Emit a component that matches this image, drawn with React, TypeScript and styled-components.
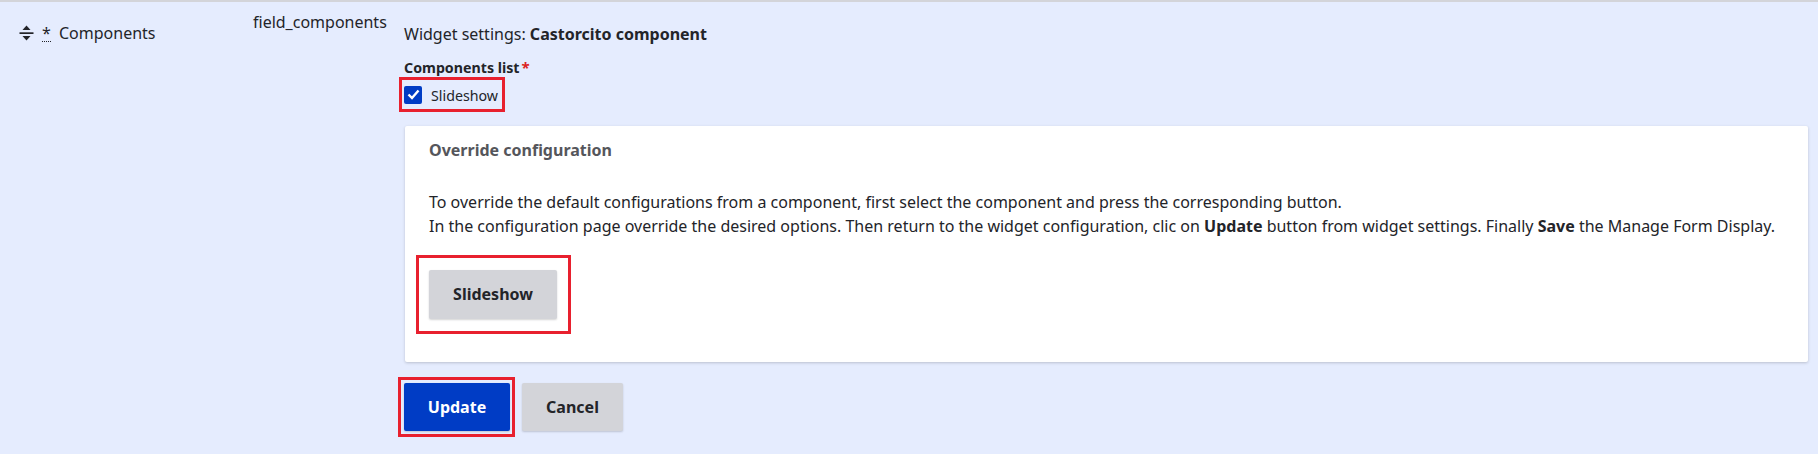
import React from "react";
import styled, { createGlobalStyle } from "styled-components";

const Global = createGlobalStyle`
  html, body { margin: 0; padding: 0; background: #fff; }
  body { font-family: "Noto Sans", sans-serif; color: #232429; font-size: 16px; line-height: 24px; }
`;
const Row = styled.div`
  width: 1818px; height: 454px; box-sizing: border-box; background: #e5ecfe;
  border-top: 2px solid #d3d4d9; display: grid; grid-template-columns: 253px 151px 1fr;
`;
const NameCell = styled.div`display: flex; align-items: flex-start; padding: 19px 0 0 19px;`;
const Handle = styled.svg`width: 15px; height: 18px; margin-top: 3px; flex: none;`;
const Abbr = styled.span`
  margin-left: 8px; width: 9px; height: 20px; text-align: center; border-bottom: 1px dotted #232429; line-height: 24px;
`;
const NameText = styled.span`margin-left: 8px;`;
const MachineCell = styled.div`padding-top: 8px; white-space: nowrap;`;
const Settings = styled.div`display: flex; flex-direction: column; align-items: flex-start; padding-top: 20px; padding-right: 10px;`;
const Summary = styled.div`height: 24px;`;
const FieldLabel = styled.div`margin-top: 11px; font-weight: 700; font-size: 14.22px; line-height: 20px; height: 20px;`;
const Req = styled.span`color: #dc2323; margin-left: 2px; font-size: 15px; font-weight: 700;`;
const Marked = styled.div`
  border: 3px solid #e8202e; box-sizing: border-box; display: flex;
`;
const CheckMark = styled(Marked)`
  margin: 0 0 0 -5px; width: 106px; height: 35px; align-items: center; padding-left: 2px;
`;
const Box = styled.span`
  width: 18px; height: 18px; background: #003cc5; border-radius: 2px; display: flex; align-items: center; justify-content: center; flex: none;
`;
const CheckLabel = styled.span`margin-left: 9px; padding-top: 3px; font-size: 14.22px; line-height: 20px;`;
const Card = styled.section`
  margin: 14px 0 0 1px; width: calc(100% - 1px); height: 236px; box-sizing: border-box; background: #fff; border-radius: 2px;
  box-shadow: 0 1px 3px rgba(35,36,41,.22); padding: 12px 24px 0;
`;
const CardTitle = styled.h3`margin: 0; font-size: 16px; line-height: 24px; font-weight: 700; color: #55565b;`;
const Copy = styled.p`margin: 28px 0 0; font-size: 16px; line-height: 24px; white-space: nowrap; strong { font-weight: 700; }`;
const SlideMark = styled(Marked)`margin: 17px 0 0 -13px; width: 155px; height: 79px; padding: 12px 0 0 10px;`;
const GrayButton = styled.button`
  font: 700 16px/24px "Noto Sans", sans-serif; color: #232429; border: 0; border-radius: 2px; background: #d3d4d9; padding: 0;
  box-shadow: 0 1px 2px rgba(35,36,41,.2); height: 48px;
`;
const SlideButton = styled(GrayButton)`width: 128px; height: 49px; padding-bottom: 2px;`;
const Actions = styled.div`display: flex; align-items: flex-start; margin-top: 15px; margin-left: -6px;`;
const UpdateMark = styled(Marked)`width: 117px; height: 60px; padding: 3px 0 0 3px;`;
const UpdateButton = styled(GrayButton)`width: 106px; background: #003cc5; color: #fff;`;
const CancelButton = styled(GrayButton)`width: 101px; margin: 6px 0 0 7px;`;

export default function App() {
  return (
    <>
      <Global />
      <Row>
        <NameCell>
          <Handle viewBox="0 0 15 18" aria-hidden="true">
            <path d="M7.5 1.5 11.5 6h-8z" fill="#232429" />
            <rect x="0.5" y="8.3" width="14" height="1.7" fill="#232429" />
            <path d="M7.5 16.5 3.5 12h8z" fill="#232429" />
          </Handle>
          <Abbr>*</Abbr>
          <NameText>Components</NameText>
        </NameCell>
        <MachineCell>field_components</MachineCell>
        <Settings>
          <Summary>Widget settings: <strong>Castorcito component</strong></Summary>
          <FieldLabel>Components list<Req>*</Req></FieldLabel>
          <CheckMark>
            <Box>
              <svg width="13" height="11" viewBox="0 0 13 11" aria-hidden="true">
                <path d="M1.5 5.5 5 9 11.5 1.5" fill="none" stroke="#fff" strokeWidth="2.4" />
              </svg>
            </Box>
            <CheckLabel>Slideshow</CheckLabel>
          </CheckMark>
          <Card>
            <CardTitle>Override configuration</CardTitle>
            <Copy>
              To override the default configurations from a component, first select the component and press the corresponding button.<br />
              In the configuration page override the desired options. Then return to the widget configuration, clic on <strong>Update</strong> button from widget settings. Finally <strong>Save</strong> the Manage Form Display.
            </Copy>
            <SlideMark><SlideButton>Slideshow</SlideButton></SlideMark>
          </Card>
          <Actions>
            <UpdateMark><UpdateButton>Update</UpdateButton></UpdateMark>
            <CancelButton>Cancel</CancelButton>
          </Actions>
        </Settings>
      </Row>
    </>
  );
}
